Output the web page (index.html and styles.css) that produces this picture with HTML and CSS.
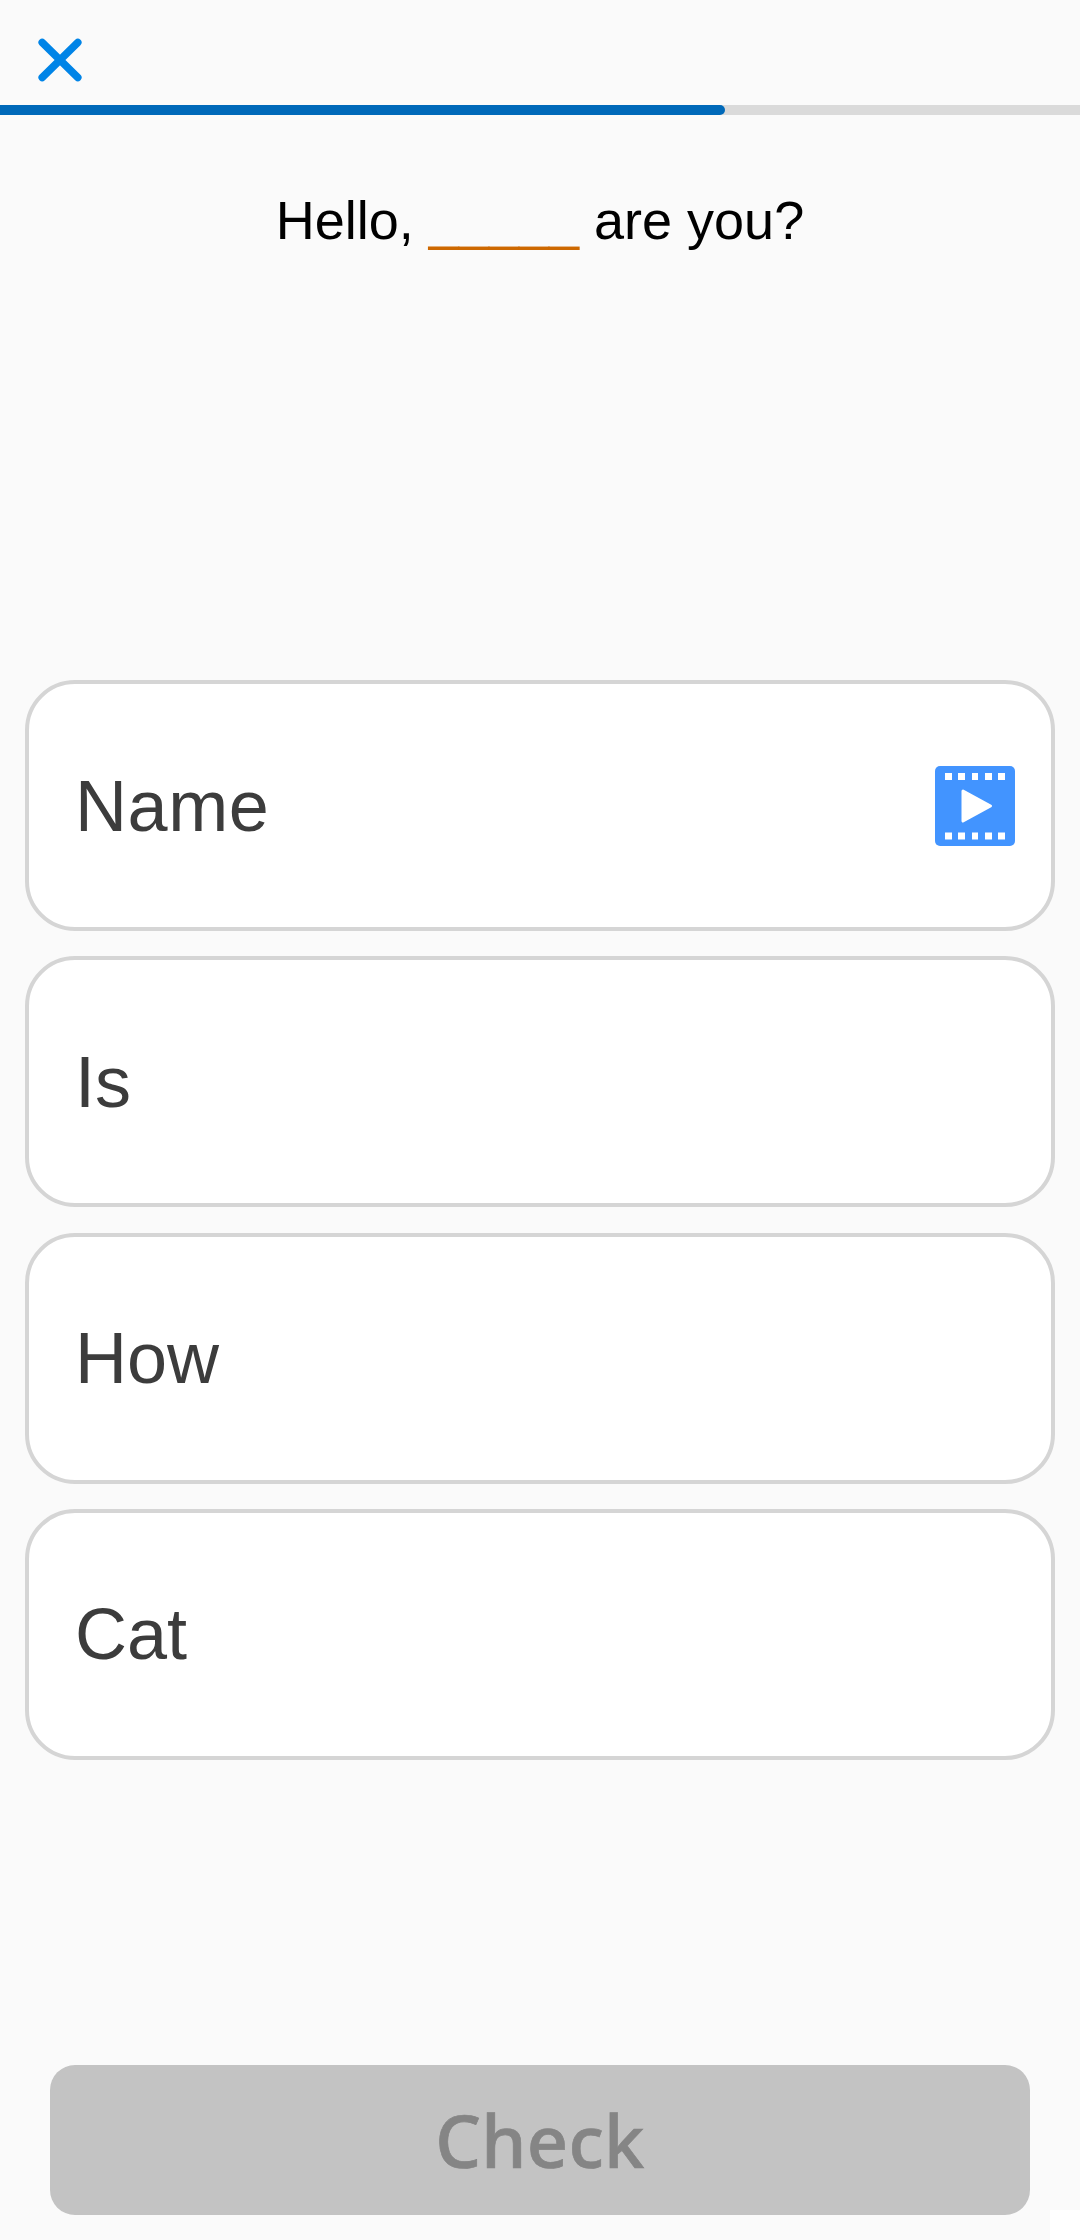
FILE: index.html
```html
<!DOCTYPE html>
<html lang="en">
<head>
<meta charset="utf-8">
<title>Quiz</title>
<link rel="stylesheet" href="styles.css">
</head>
<body>
<main class="quiz">
  <header class="topbar">
    <button class="close" aria-label="Close">
      <svg viewBox="0 0 42 42"><path d="M3.200 3.500 38.800 38.500M38.800 3.500 3.200 38.500"/></svg>
    </button>
  </header>
  <div class="progress"><div class="progress-fill" style="width:725px"></div></div>
  <p class="question">Hello, <span class="blank">_____</span> are you?</p>
  <section class="answers">
    <button class="answer"><span class="wide">Name</span>
      <svg class="film" viewBox="0 0 80 80">
        <rect class="film-body" width="80" height="80" rx="5"/>
        <path class="film-holes" d="M10 7h7v7h-7zM23 7h7v7h-7zM37 7h6v7h-6zM50 7h7v7h-7zM63 7h7v7h-7zM10 66.500h7v7h-7zM23 66.500h7v7h-7zM37 66.500h6v7h-6zM50 66.500h7v7h-7zM63 66.500h7v7h-7z"/>
        <path class="film-play" d="M28 25 55.500 40 28 55z"/>
      </svg>
    </button>
    <button class="answer"><span>Is</span></button>
    <button class="answer"><span>How</span></button>
    <button class="answer"><span>Cat</span></button>
  </section>
  <footer class="actions">
    <button class="check" disabled>Check</button>
  </footer>
  <div class="corner"></div>
</main>
</body>
</html>
```
FILE: styles.css
```css
* { box-sizing: border-box; }
body { margin: 0; background: #fafafa; }
button { border: 0; padding: 0; margin: 0; background: none; }
.quiz {
  position: relative;
  width: 1080px;
  height: 2240px;
  display: flex;
  flex-direction: column;
  overflow: hidden;
  font-family: "Liberation Sans", Arial, sans-serif;
}
.topbar { height: 105px; padding: 39px 0 0 39px; }
.close { display: block; width: 42px; height: 42px; }
.close svg { display: block; width: 42px; height: 42px; overflow: visible; }
.close path { stroke: #0084e7; stroke-width: 7.5; stroke-linecap: round; }
.progress { height: 10px; background: #dadada; }
.progress-fill { height: 10px; background: #0069b9; border-radius: 0 5px 5px 0; }
.question {
  margin: 0;
  height: 565px;
  padding-top: 73px;
  text-align: center;
  font-size: 54px;
  line-height: 64px;
  color: #000;
}
.blank { color: #cd6800; }
.answers { display: flex; flex-direction: column; gap: 25.33px; padding: 0 25px; }
.answer {
  display: flex;
  align-items: center;
  justify-content: space-between;
  height: 251px;
  padding: 0 36px 0 46px;
  border: 4px solid #d5d5d5;
  border-radius: 50px;
  background: #fff;
  color: #3c3c3c;
  font-family: inherit;
  font-size: 72px;
  line-height: 84px;
}
.wide { letter-spacing: .6px; }
.film { width: 80px; height: 80px; }
.film-body { fill: #4294ff; }
.film-holes { fill: #fff; }
.film-play { fill: #fff; stroke: #fff; stroke-width: 3; stroke-linejoin: round; }
.actions { margin-top: auto; padding: 0 50px 25px; }
.check {
  display: block;
  width: 100%;
  height: 150px;
  border-radius: 25px;
  background: #c3c3c3;
  color: #858585;
  font: 500 72px/98px "Noto Sans", sans-serif;
  letter-spacing: .3px;
  -webkit-text-stroke: .7px #858585;
}
.corner { position: absolute; right: 0; bottom: 0; width: 30px; height: 30px; background: #fff; }
```
